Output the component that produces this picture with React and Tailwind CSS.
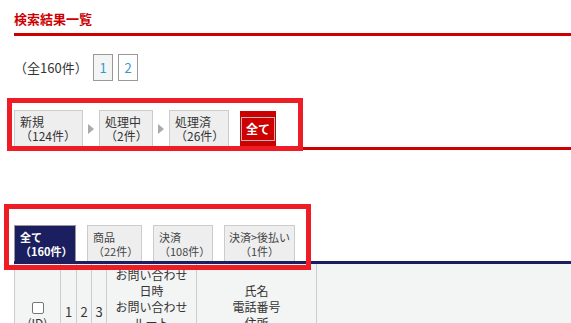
import React from "react";

function Arrow() {
  return (
    <div className="w-[16px] h-[37px] flex items-center justify-center">
      <svg width="6" height="10" viewBox="0 0 6 10">
        <polygon points="0,0 6,5 0,10" fill="#aaaaaa" />
      </svg>
    </div>
  );
}

function StatusTab({ w, label, count }) {
  return (
    <div className={"h-[37px] border border-b-0 border-[#cccccc] bg-[#eeeeee] px-[5px] pt-[4px] text-[12px] leading-[14px] text-[#333] " + w}>
      {label}
      <br />
      {count}
    </div>
  );
}

function KindTab({ w, label, count, center }) {
  return (
    <div className={"h-[36px] border border-b-0 border-[#cccccc] bg-[#eeeeee] flex flex-col justify-center text-[11px] leading-[14px] text-[#444] whitespace-nowrap " + w + (center ? " text-center px-[1px]" : " px-[5px]")}>
      <span>{label}</span>
      <span>{count}</span>
    </div>
  );
}

export default function App() {
  return (
    <div className="relative w-[571px] h-[323px] overflow-hidden bg-white text-[#333] font-['Noto_Sans_CJK_JP',sans-serif]">
      <div className="pl-[14px]">
        <div className="pt-[11px] pb-[6px] border-b-[3px] border-[#cc0000] text-[13px] leading-[16px] font-bold text-[#cc0000]">
          検索結果一覧
        </div>

        <div className="mt-[18px] flex items-center h-[27px]">
          <span className="w-[79px] text-[13px] leading-[16px]">（全160件）</span>
          <a className="w-[20px] h-[27px] border border-[#999] bg-[#f3f4f4] flex items-center justify-center text-[13px] text-[#3399cc]">1</a>
          <a className="ml-[5px] w-[20px] h-[27px] border border-[#999] bg-white flex items-center justify-center text-[13px] text-[#3399cc]">2</a>
        </div>

        <div className="mt-[29px] flex items-end border-b-[3px] border-[#cc0000]">
          <StatusTab w="w-[69px]" label="新規" count="（124件）" />
          <Arrow />
          <StatusTab w="w-[54px]" label="処理中" count="（2件）" />
          <Arrow />
          <StatusTab w="w-[60px]" label="処理済" count="（26件）" />
          <div className="ml-[11px] w-[36px] h-[36px] bg-[#cc0000] px-px pt-[6px] pb-[6px]">
            <div className="h-[24px] border border-[#bbbbbb] flex items-center justify-center text-white font-bold text-[12px]">全て</div>
          </div>
        </div>

        <div className="mt-[75px] flex items-end gap-[11px] border-b-[3px] border-[#1b1f5f]">
          <div className="w-[62px] h-[36px] border border-b-0 border-[#999] bg-[#1b1f5f] px-[5px] flex flex-col justify-center text-[11px] leading-[14px] font-bold text-white whitespace-nowrap">
            <span>全て</span>
            <span>（160件）</span>
          </div>
          <KindTab w="w-[55px]" label="商品" count="（22件）" />
          <KindTab w="w-[60px]" label="決済" count="（108件）" />
          <KindTab w="w-[71px]" label="決済>後払い" count="（1件）" center />
        </div>

        <div className="grid grid-cols-[46px_16px_15px_15px_90px_120px_1fr] h-[90px] bg-[#f3f4f4] text-[12px] leading-[16px] text-[#333]">
          <div className="border-l border-[#cccccc] flex flex-col items-center pt-[38px]">
            <div className="w-[12px] h-[12px] border border-[#767676] rounded-[2px] bg-white"></div>
            <span className="mt-px">(ID)</span>
          </div>
          <div className="border-l border-[#cccccc] pt-[40px] text-center text-[13px]">1</div>
          <div className="border-l border-[#cccccc] pt-[40px] text-center text-[13px]">2</div>
          <div className="border-l border-[#cccccc] pt-[40px] text-center text-[13px]">3</div>
          <div className="border-l border-[#cccccc] pt-[3px] text-center">
            お問い合わせ
            <br />
            日時
            <br />
            お問い合わせ
            <br />
            ルート
          </div>
          <div className="border-l border-[#cccccc] pt-[19px] text-center">
            氏名
            <br />
            電話番号
            <br />
            住所
          </div>
          <div className="border-l border-[#cccccc]"></div>
        </div>
      </div>

      <div className="absolute left-[7px] top-[98px] w-[296px] h-[53px] border-[5px] border-[#ee1c24]"></div>
      <div className="absolute left-[4px] top-[204px] w-[307px] h-[66px] border-[5px] border-[#ee1c24]"></div>
    </div>
  );
}
